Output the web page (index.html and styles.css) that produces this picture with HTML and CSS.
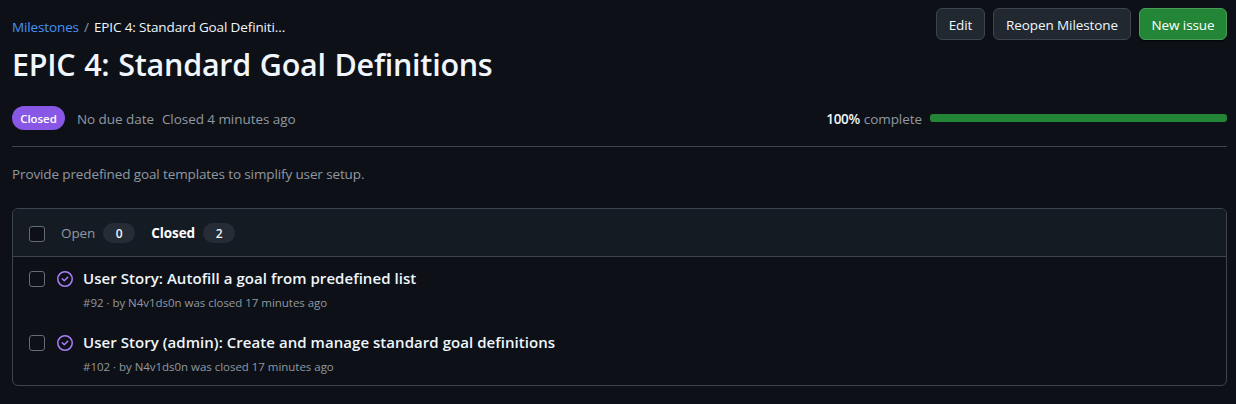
FILE: index.html
```html
<!DOCTYPE html>
<html lang="en">
<head>
<meta charset="utf-8">
<title>EPIC 4: Standard Goal Definitions</title>
<link rel="stylesheet" href="styles.css">
</head>
<body>
<header class="top">
  <div class="heading">
    <nav class="crumbs"><a class="crumb-link">Milestones</a><span class="slash">/</span><span class="crumb-current">EPIC 4: Standard Goal Definiti...</span></nav>
    <h1 class="title">EPIC 4: Standard Goal Definitions</h1>
  </div>
  <div class="actions">
    <button class="btn">Edit</button>
    <button class="btn btn-reopen">Reopen Milestone</button>
    <button class="btn btn-primary">New issue</button>
  </div>
</header>
<section class="meta">
  <span class="state">Closed</span>
  <span class="due">No due date</span>
  <span class="closed-at">Closed 4 minutes ago</span>
  <span class="progress-label"><b>100%</b><span>complete</span></span>
  <span class="progress"></span>
</section>
<p class="description">Provide predefined goal templates to simplify user setup.</p>
<main class="list">
  <div class="list-head">
    <span class="box"></span>
    <a class="tab tab-open">Open</a><span class="count">0</span>
    <a class="tab tab-closed">Closed</a><span class="count">2</span>
  </div>
  <article class="row">
    <span class="box"></span>
    <svg class="icon" viewBox="0 0 16 16"><path d="M11.28 6.78a.75.75 0 0 0-1.06-1.06L7.25 8.69 5.78 7.22a.75.75 0 0 0-1.06 1.06l2 2a.75.75 0 0 0 1.06 0l3.5-3.5Z"/><path d="M16 8A8 8 0 1 1 0 8a8 8 0 0 1 16 0Zm-1.5 0a6.5 6.5 0 1 0-13 0 6.5 6.5 0 0 0 13 0Z"/></svg>
    <div class="issue"><a class="issue-title">User Story: Autofill a goal from predefined list</a><span class="issue-meta">#92 · by N4v1ds0n was closed 17 minutes ago</span></div>
  </article>
  <article class="row">
    <span class="box"></span>
    <svg class="icon" viewBox="0 0 16 16"><path d="M11.28 6.78a.75.75 0 0 0-1.06-1.06L7.25 8.69 5.78 7.22a.75.75 0 0 0-1.06 1.06l2 2a.75.75 0 0 0 1.06 0l3.5-3.5Z"/><path d="M16 8A8 8 0 1 1 0 8a8 8 0 0 1 16 0Zm-1.5 0a6.5 6.5 0 1 0-13 0 6.5 6.5 0 0 0 13 0Z"/></svg>
    <div class="issue"><a class="issue-title">User Story (admin): Create and manage standard goal definitions</a><span class="issue-meta">#102 · by N4v1ds0n was closed 17 minutes ago</span></div>
  </article>
</main>
</body>
</html>
```
FILE: styles.css
```css
* { box-sizing: border-box; }
body { margin: 0; padding: 8px 9px 0 12px; height: 404px; overflow: hidden; background: #0d1117; color: #f0f6fc; font: 13.5px/20px "Open Sans", "Noto Sans", sans-serif; white-space: nowrap; }
.top { display: flex; justify-content: space-between; height: 80px; }
.crumbs { display: flex; padding-top: 9px; letter-spacing: -0.13px; }
.crumb-link { color: #4493f8; }
.slash { width: 15px; text-align: center; color: #9198a1; }
.title { margin: 3px 0 0; font-size: 30.5px; line-height: 48px; font-weight: 600; letter-spacing: -0.25px; word-spacing: 1.1px; }
.actions { display: flex; gap: 8px; }
.btn { width: 49px; height: 32px; padding: 2px 0 0; border: 1px solid #3d444d; border-radius: 6px; background: #212830; color: #f0f6fc; font: inherit; font-weight: 500; line-height: 20px; letter-spacing: -0.08px; }
.btn-reopen { width: 138px; }
.btn-primary { width: 88px; background: #238636; border-color: #4a9a58; color: #fff; box-shadow: 0 1px 2px #010409; }
.meta { display: flex; align-items: center; height: 59px; padding-top: 2px; border-bottom: 1px solid #3d444d; color: #9198a1; letter-spacing: -0.06px; }
.state { width: 53px; height: 24px; margin-right: 12px; border-radius: 12px; background: #8957e5; color: #fff; font-size: 11.5px; font-weight: 600; line-height: 25px; text-align: center; }
.due, .closed-at, .progress-label { padding-top: 2px; }
.closed-at { margin-left: 8px; }
.progress-label { margin-left: auto; display: flex; gap: 4px; }
.progress-label b { color: #f0f6fc; font-weight: 600; letter-spacing: -0.35px; }
.progress { width: 297px; height: 8px; margin-left: 8px; border-radius: 3px; background: #238636; }
.description { margin: 17px 0 24px; color: #9198a1; letter-spacing: -0.12px; }
.list { height: 178px; border: 1px solid #3d444d; border-radius: 6px; overflow: hidden; }
.list-head { display: flex; align-items: center; height: 48px; padding: 1px 0 0 16px; background: #151b23; border-bottom: 1px solid #3d444d; color: #9198a1; }
.box { flex: none; width: 16px; height: 16px; border: 1px solid #656c76; border-radius: 3px; background: #0d1117; }
.list-head .box { margin-top: 2px; }
.tab-open { margin-left: 16px; letter-spacing: -0.1px; }
.tab-closed { margin-left: 16px; color: #fff; font-weight: 700; letter-spacing: -0.08px; }
.count { width: 32px; height: 20px; margin-left: 8px; border-radius: 10px; background: #262c36; color: #f0f6fc; font-size: 12px; font-weight: 600; line-height: 21px; text-align: center; }
.row { display: flex; height: 64px; padding: 14px 16px 0; }
.icon { flex: none; width: 16px; height: 16px; margin: 0 10px 0 12px; fill: #ab7df8; }
.issue { display: flex; flex-direction: column; margin-top: -5px; }
.issue-title { font-size: 15px; line-height: 24px; font-weight: 600; letter-spacing: 0.05px; }
.issue-meta { margin-top: 4px; font-size: 11.5px; line-height: 18px; letter-spacing: -0.03px; color: #9198a1; }
```
